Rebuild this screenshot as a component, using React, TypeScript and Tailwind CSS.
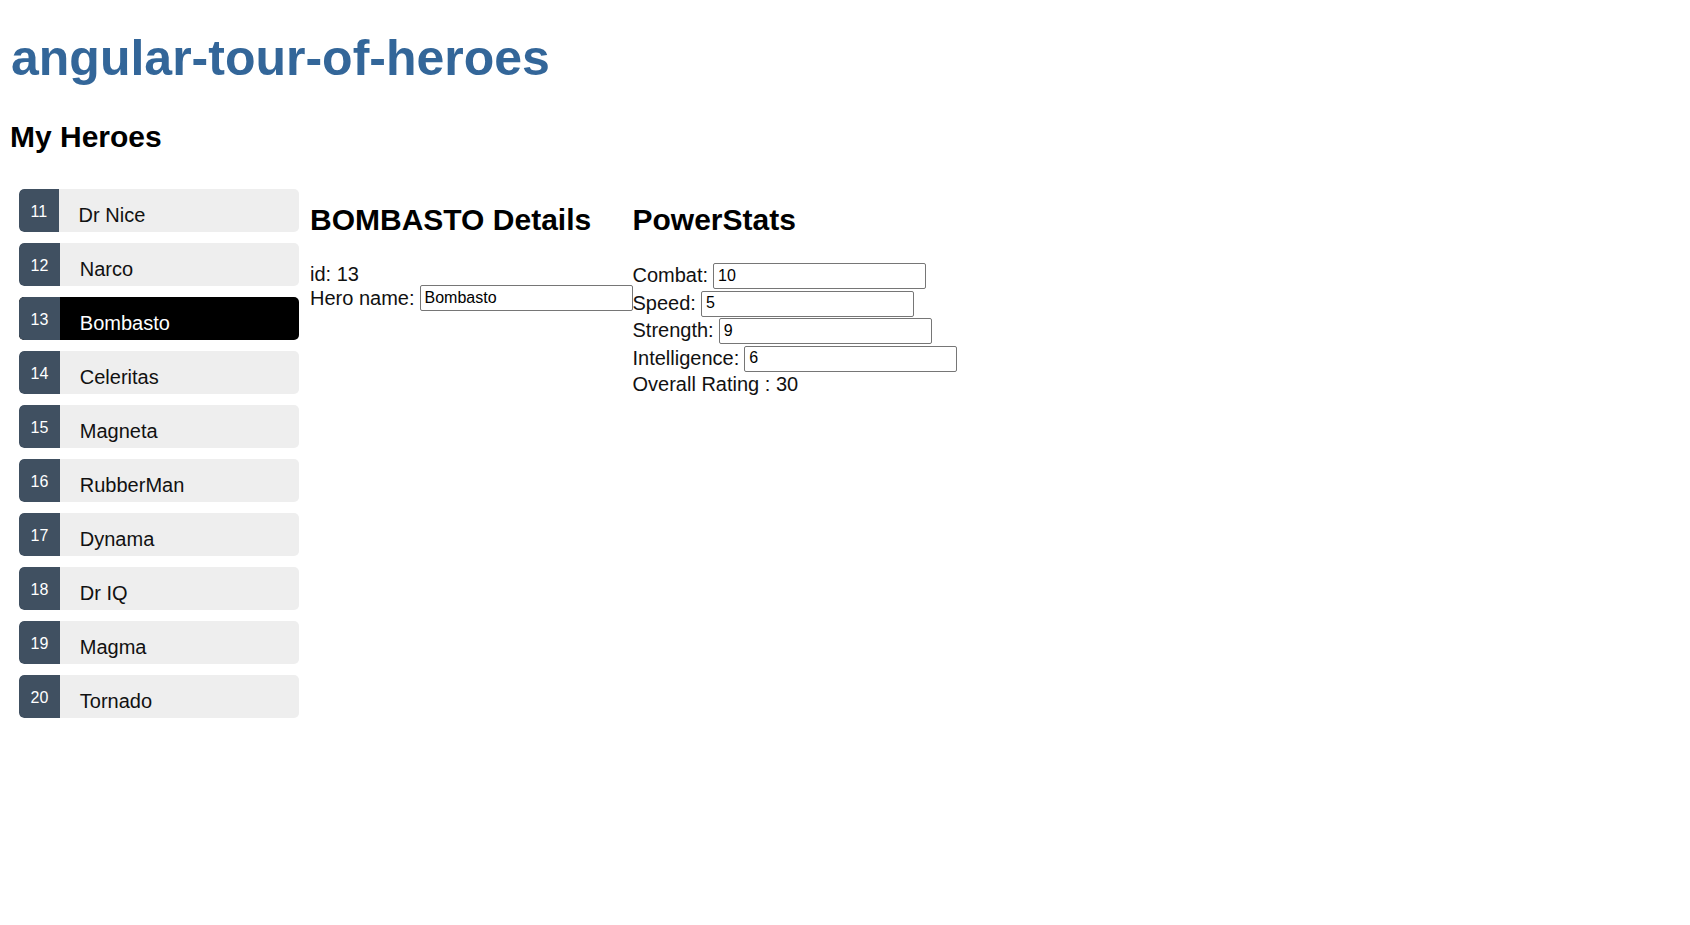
import React, { useState } from 'react';

type Hero = { id: number; name: string };

const HEROES: Hero[] = [
  { id: 11, name: 'Dr Nice' },
  { id: 12, name: 'Narco' },
  { id: 13, name: 'Bombasto' },
  { id: 14, name: 'Celeritas' },
  { id: 15, name: 'Magneta' },
  { id: 16, name: 'RubberMan' },
  { id: 17, name: 'Dynama' },
  { id: 18, name: 'Dr IQ' },
  { id: 19, name: 'Magma' },
  { id: 20, name: 'Tornado' },
];

const inputClass =
  "ml-[5px] w-[213px] h-[26px] border border-[#767676] rounded-[2px] pl-[4px] pr-[2px] pt-0 pb-[1px] text-[16px] text-black font-['Liberation_Sans',Arial,sans-serif] bg-white outline-none";

export default function App() {
  const [selectedId, setSelectedId] = useState<number>(13);
  const [heroName, setHeroName] = useState('Bombasto');
  const [stats, setStats] = useState({ combat: '10', speed: '5', strength: '9', intelligence: '6' });

  const selected = HEROES.find((h) => h.id === selectedId)!;
  const overall =
    (Number(stats.combat) || 0) +
    (Number(stats.speed) || 0) +
    (Number(stats.strength) || 0) +
    (Number(stats.intelligence) || 0);

  const statRows: { key: keyof typeof stats; label: string }[] = [
    { key: 'combat', label: 'Combat' },
    { key: 'speed', label: 'Speed' },
    { key: 'strength', label: 'Strength' },
    { key: 'intelligence', label: 'Intelligence' },
  ];

  return (
    <div className="min-h-screen bg-white pl-[9px] text-[#111] font-['Liberation_Sans',Arial,sans-serif]">
      <h1 className="pt-[30px] ml-[2px] text-[50px] leading-[57px] font-bold text-[#336699]">angular-tour-of-heroes</h1>
      <h2 className="mt-[33px] ml-[1px] text-[30px] leading-[34px] font-bold text-black">My Heroes</h2>

      <div className="mt-[25px] flex items-start">
        {/* heroes list */}
        <ul className="w-[300px] pt-[10px] flex flex-col gap-[11px]">
          {HEROES.map((hero) => {
            const isSel = hero.id === selectedId;
            return (
              <li
                key={hero.id}
                onClick={() => setSelectedId(hero.id)}
                className={`ml-[10px] w-[280px] h-[43px] flex rounded-[5px] overflow-hidden cursor-pointer ${
                  isSel ? 'bg-black text-white' : 'bg-[#eeeeee] text-[#111]'
                }`}
              >
                <span className="h-full bg-[#405061] text-white text-[16px] leading-[16px] px-[11.5px] pt-[15px] rounded-l-[5px]">
                  {hero.id}
                </span>
                <span className="ml-[20px] pt-[15px] text-[20px] leading-[23px]">{hero.name}</span>
              </li>
            );
          })}
        </ul>

        {/* details */}
        <div className="ml-[1px]">
          <h2 className="mt-[24px] text-[30px] leading-[34px] font-bold text-black whitespace-nowrap">
            {selected.name.toUpperCase()} Details
          </h2>
          <div className="mt-[26px] h-[22px] text-[20px] leading-[23px]">id: {selected.id}</div>
          <div className="flex items-start h-[27.5px] text-[20px] leading-[23px] whitespace-nowrap">
            <span className="pt-[2px]">Hero name:</span>
            <input className={inputClass} value={heroName} onChange={(e) => setHeroName(e.target.value)} />
          </div>
        </div>

        {/* powerstats */}
        <div>
          <h2 className="mt-[24px] text-[30px] leading-[34px] font-bold text-black">PowerStats</h2>
          <div className="mt-[26px] text-[20px] leading-[23px] whitespace-nowrap">
            {statRows.map((row) => (
              <div key={row.key} className="flex items-start h-[27.5px]">
                <span className="pt-[1px]">{row.label}:</span>
                <input
                  className={inputClass}
                  value={stats[row.key]}
                  onChange={(e) => setStats({ ...stats, [row.key]: e.target.value })}
                />
              </div>
            ))}
            <div>Overall Rating : {overall}</div>
          </div>
        </div>
      </div>
    </div>
  );
}
